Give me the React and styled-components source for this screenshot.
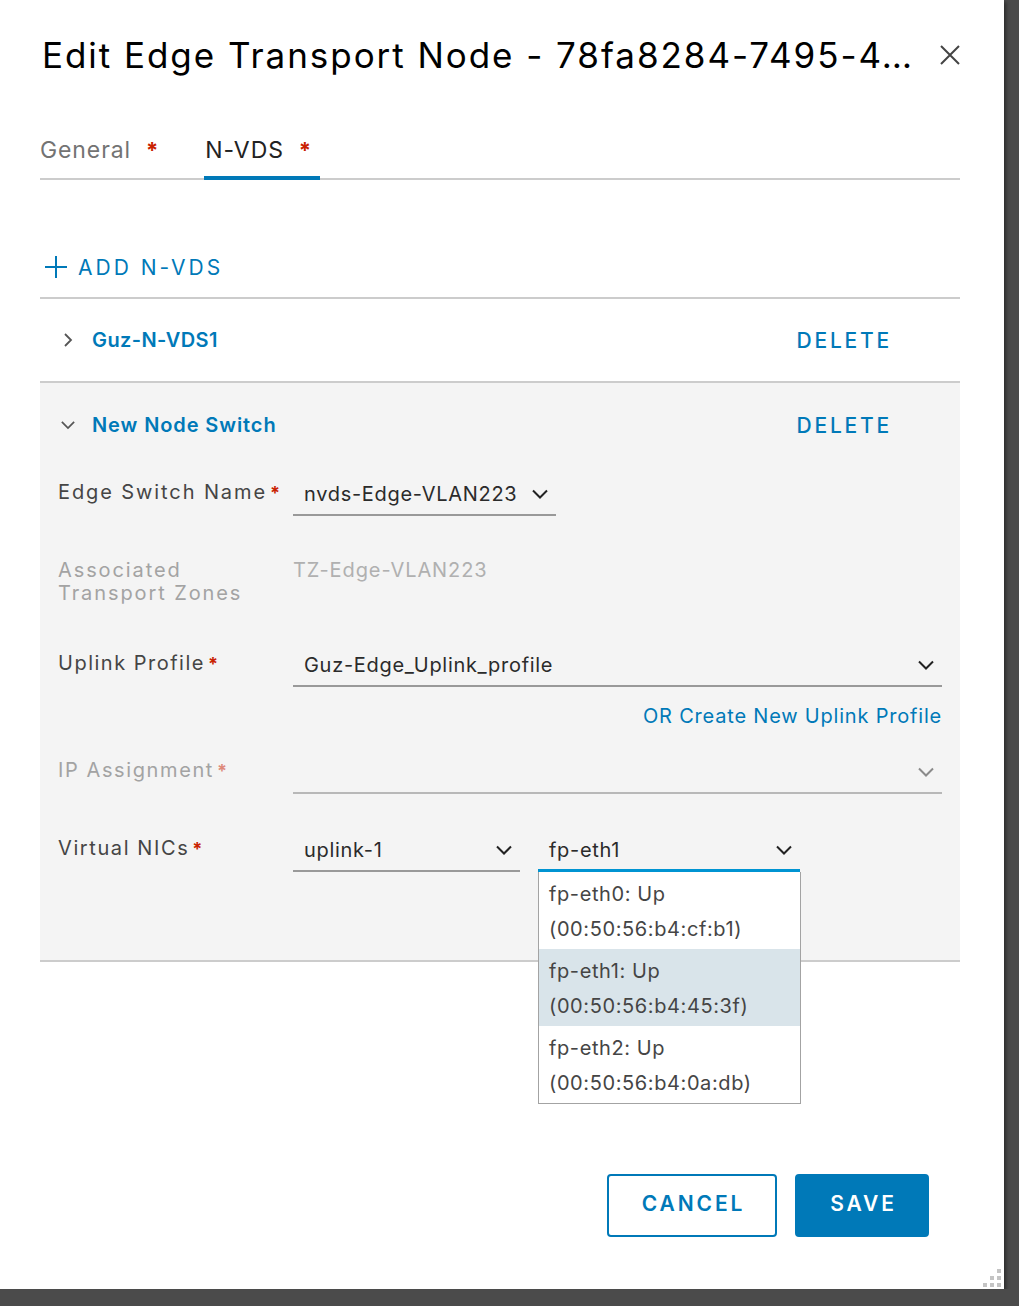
import React from "react";
import styled, { createGlobalStyle } from "styled-components";

const Global = createGlobalStyle`
  html, body { margin: 0; padding: 0; background: #4b4b4b; }
  body { font-family: "Inter", "Liberation Sans", sans-serif; }
  * { box-sizing: border-box; }
`;

const BLUE = "#0079b8";

const Modal = styled.div`
  position: relative;
  width: 1004px;
  height: 1289px;
  background: #fff;
  box-shadow: 2px 2px 4px rgba(0, 0, 0, 0.45);
  padding: 28px 44px 0 40px;
  display: flex;
  flex-direction: column;
`;

const Header = styled.div`
  display: flex;
  align-items: center;
  justify-content: space-between;
  height: 54px;
`;

const Title = styled.h1`
  margin: 0 0 0 2px;
  font-size: 35px;
  font-weight: 400;
  color: #000;
  line-height: 54px;
  letter-spacing: 1.95px;
  white-space: nowrap;
`;

const CloseBtn = styled.button`
  border: 0;
  background: none;
  padding: 0;
  width: 22px;
  height: 22px;
  margin-right: -1px;
  display: flex;
`;

const TabList = styled.div`
  display: flex;
  margin-top: 42px;
  border-bottom: 2px solid #cccccc;
`;

const Tab = styled.div`
  display: flex;
  align-items: flex-start;
  height: 56px;
  line-height: 52px;
  margin-bottom: -2px;
  margin-right: 37px;
  padding: 0 9px 0 ${(p) => (p.$active ? 1 : 0)}px;
  border-bottom: 4px solid ${(p) => (p.$active ? BLUE : "transparent")};
  font-size: 23px;
  color: ${(p) => (p.$active ? "#222" : "#737373")};
  letter-spacing: 0.9px;
`;

const Req = styled.span`
  color: #c92100;
  font-weight: 700;
  font-size: ${(p) => p.$size || 22}px;
  margin-left: ${(p) => p.$gap ?? 15}px;
  letter-spacing: 0;
  opacity: ${(p) => (p.$faded ? 0.5 : 1)};
`;

const AddButton = styled.button`
  margin-top: 63px;
  height: 48px;
  align-self: flex-start;
  display: flex;
  align-items: center;
  gap: 10px;
  border: 0;
  background: none;
  padding: 0 0 0 4px;
  color: ${BLUE};
  font-family: inherit;
  font-size: 21px;
  letter-spacing: 3px;
  text-transform: uppercase;
`;

const SwitchList = styled.div`
  margin-top: 6px;
  width: 920px;
  border-bottom: 2px solid #cccccc;
`;

const SwitchItem = styled.div`
  border-top: 2px solid #cccccc;
  background: ${(p) => (p.$open ? "#f4f4f4" : "#fff")};
  padding-bottom: ${(p) => (p.$open ? 88 : 0)}px;
`;

const SwitchHead = styled.div`
  height: ${(p) => p.$h || 82}px;
  display: flex;
  align-items: center;
  padding: 0 70px 0 20px;
`;

const Chevron = styled.span`
  width: 16px;
  display: flex;
  justify-content: center;
  margin-right: 16px;
`;

const SwitchName = styled.span`
  flex: 1;
  color: ${BLUE};
  font-weight: 600;
  font-size: 20px;
  letter-spacing: ${(p) => p.$ls ?? 0.4}px;
`;

const DeleteBtn = styled.button`
  border: 0;
  background: none;
  padding: 0;
  margin-right: -2px;
  color: ${BLUE};
  font-family: inherit;
  font-size: 21px;
  font-weight: 500;
  letter-spacing: 2.8px;
`;

const Form = styled.div`
  padding: 7px 18px 0 18px;
  display: flex;
  flex-direction: column;
`;

const Row = styled.div`
  display: grid;
  grid-template-columns: 235px 1fr;
  align-items: start;
  margin-top: ${(p) => p.$mt || 0}px;
`;

const Label = styled.div`
  font-size: 20px;
  line-height: ${(p) => p.$lh || 36}px;
  color: ${(p) => (p.$disabled ? "#a3a3a3" : "#454545")};
  letter-spacing: ${(p) => p.$ls ?? 1}px;
`;

const Value = styled.div`
  font-size: 20px;
  line-height: 23px;
  color: #b0b0b0;
  letter-spacing: 0.9px;
`;

const Selects = styled.div`
  display: flex;
  gap: 18px;
`;

const SelectWrap = styled.div`
  position: relative;
  width: ${(p) => (p.$w ? `${p.$w}px` : "100%")};
`;

const Select = styled.div`
  height: 42px;
  display: flex;
  align-items: center;
  justify-content: space-between;
  padding: 0 8px 0 11px;
  border-bottom: ${(p) => (p.$focus ? `3px solid #0094d2` : `2px solid ${p.$disabled ? "#b8b8b8" : "#999"}`)};
  font-size: 20px;
  color: #2b2b2b;
  letter-spacing: 0.7px;
`;

const LinkRow = styled.div`
  margin-top: 17px;
  text-align: right;
  font-size: 20px;
  line-height: 24px;
  color: ${BLUE};
  letter-spacing: 0.8px;
`;

const Menu = styled.div`
  position: absolute;
  left: 0;
  top: 42px;
  width: 263px;
  background: #fff;
  border: 1px solid #a3a3a3;
  border-top: 0;
  z-index: 5;
`;

const MenuItem = styled.div`
  padding: 5px 0 2px 10px;
  background: ${(p) => (p.$active ? "#d9e4ea" : "#fff")};
  font-size: 20px;
  line-height: 35px;
  color: #454545;
  letter-spacing: 0.6px;
`;

const Footer = styled.div`
  margin-top: auto;
  margin-bottom: 52px;
  margin-right: 31px;
  display: flex;
  justify-content: flex-end;
  gap: 18px;
`;

const Button = styled.button`
  height: 63px;
  width: ${(p) => p.$w}px;
  padding: 0 0 5px 3px;
  border-radius: 4px;
  border: 2px solid ${BLUE};
  background: ${(p) => (p.$primary ? BLUE : "#fff")};
  color: ${(p) => (p.$primary ? "#fff" : BLUE)};
  font-family: inherit;
  font-size: 21px;
  font-weight: 600;
  letter-spacing: 2.9px;
`;

const Grip = styled.div`
  position: absolute;
  right: 3px;
  bottom: 2px;
  width: 18px;
  height: 18px;
`;

const ChevronDown = ({ color = "#222", w = 16 }) => (
  <svg width={w} height="10" viewBox="0 0 16 10" fill="none">
    <path d="M1 1.5 L8 8.5 L15 1.5" stroke={color} strokeWidth="2" />
  </svg>
);

const ChevronRight = () => (
  <svg width="10" height="14" viewBox="0 0 10 14" fill="none">
    <path d="M2 1 L8 7 L2 13" stroke="#555" strokeWidth="1.8" />
  </svg>
);

const Plus = () => (
  <svg width="24" height="24" viewBox="0 0 24 24" fill="none">
    <path d="M12 1 V23 M1 12 H23" stroke={BLUE} strokeWidth="2" />
  </svg>
);

export default function App() {
  return (
    <>
      <Global />
      <Modal>
        <Header>
          <Title>Edit Edge Transport Node - 78fa8284-7495-4…</Title>
          <CloseBtn aria-label="close">
            <svg width="22" height="22" viewBox="0 0 22 22" fill="none">
              <path d="M2 2 L20 20 M20 2 L2 20" stroke="#444" strokeWidth="2" />
            </svg>
          </CloseBtn>
        </Header>

        <TabList>
          <Tab>
            General<Req>*</Req>
          </Tab>
          <Tab $active>
            N-VDS<Req>*</Req>
          </Tab>
        </TabList>

        <AddButton>
          <Plus />
          Add N-VDS
        </AddButton>

        <SwitchList>
          <SwitchItem>
            <SwitchHead>
              <Chevron>
                <ChevronRight />
              </Chevron>
              <SwitchName>Guz-N-VDS1</SwitchName>
              <DeleteBtn>DELETE</DeleteBtn>
            </SwitchHead>
          </SwitchItem>
          <SwitchItem $open>
            <SwitchHead $h={84}>
              <Chevron>
                <ChevronDown color="#555" w={14} />
              </Chevron>
              <SwitchName $ls={0.9}>New Node Switch</SwitchName>
              <DeleteBtn>DELETE</DeleteBtn>
            </SwitchHead>
            <Form>
              <Row>
                <Label $ls={1.9}>
                  Edge Switch Name<Req $size={18} $gap={3}>*</Req>
                </Label>
                <SelectWrap $w={263}>
                  <Select>
                    nvds-Edge-VLAN223
                    <ChevronDown />
                  </Select>
                </SelectWrap>
              </Row>

              <Row $mt={43}>
                <Label $lh={23} $ls={1.9} $disabled>
                  Associated
                  <br />
                  Transport Zones
                </Label>
                <Value>TZ-Edge-VLAN223</Value>
              </Row>

              <Row $mt={40}>
                <Label $ls={1.5}>
                  Uplink Profile<Req $size={18} $gap={3}>*</Req>
                </Label>
                <SelectWrap>
                  <Select>
                    Guz-Edge_Uplink_profile
                    <ChevronDown />
                  </Select>
                </SelectWrap>
              </Row>
              <LinkRow>OR Create New Uplink Profile</LinkRow>

              <Row $mt={24}>
                <Label $disabled $ls={1.6}>
                  IP Assignment<Req $size={18} $gap={3} $faded>*</Req>
                </Label>
                <SelectWrap>
                  <Select $disabled>
                    <span />
                    <ChevronDown color="#8a8a8a" />
                  </Select>
                </SelectWrap>
              </Row>

              <Row $mt={36}>
                <Label $ls={1.6}>
                  Virtual NICs<Req $size={18} $gap={3}>*</Req>
                </Label>
                <Selects>
                  <SelectWrap $w={227}>
                    <Select>
                      uplink-1
                      <ChevronDown />
                    </Select>
                  </SelectWrap>
                  <SelectWrap $w={262}>
                    <Select $focus>
                      fp-eth1
                      <ChevronDown />
                    </Select>
                    <Menu>
                      <MenuItem>
                        fp-eth0: Up
                        <br />
                        (00:50:56:b4:cf:b1)
                      </MenuItem>
                      <MenuItem $active>
                        fp-eth1: Up
                        <br />
                        (00:50:56:b4:45:3f)
                      </MenuItem>
                      <MenuItem>
                        fp-eth2: Up
                        <br />
                        (00:50:56:b4:0a:db)
                      </MenuItem>
                    </Menu>
                  </SelectWrap>
                </Selects>
              </Row>
            </Form>
          </SwitchItem>
        </SwitchList>

        <Footer>
          <Button $w={170}>CANCEL</Button>
          <Button $w={134} $primary>
            SAVE
          </Button>
        </Footer>

        <Grip>
          <svg width="18" height="18" viewBox="0 0 18 18">
            {[
              [14, 0],
              [7, 7],
              [14, 7],
              [0, 14],
              [7, 14],
              [14, 14],
            ].map(([x, y], i) => (
              <rect key={i} x={x} y={y} width="4" height="4" fill="#c4c4c4" />
            ))}
          </svg>
        </Grip>
      </Modal>
    </>
  );
}
